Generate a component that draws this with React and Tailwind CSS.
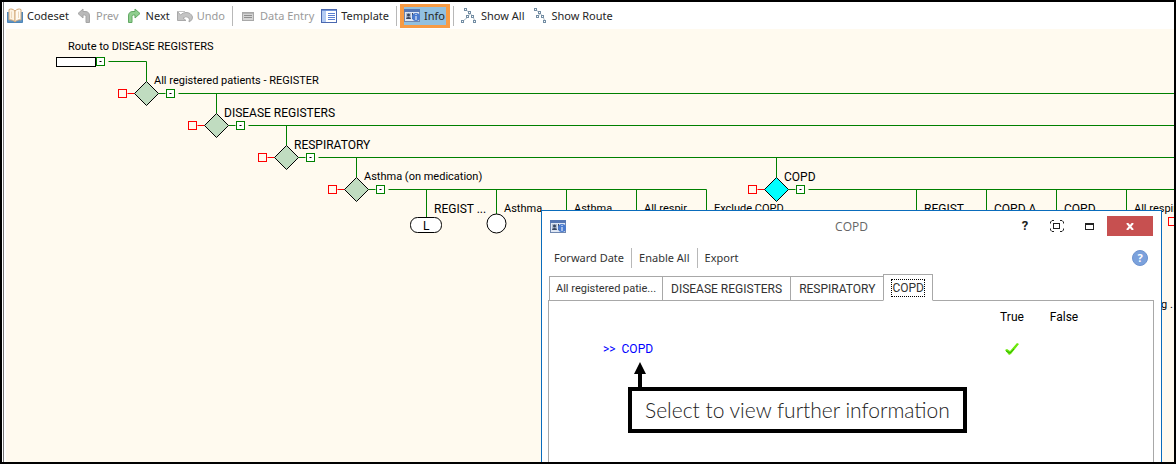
import clsx from "clsx";

// Shapes and labels share the same canvas coordinates.
const decisions = [
  { x: 140, y: 64, label: "All registered patients - REGISTER" },
  { x: 210, y: 96, label: "DISEASE REGISTERS" },
  { x: 280, y: 128, label: "RESPIRATORY" },
  { x: 350, y: 160, label: "Asthma (on medication)" },
  { x: 770, y: 160, label: "COPD", active: true },
];

const leaves = [
  { x: 420, label: "REGIST ..." },
  { x: 490, label: "Asthma ..." },
  { x: 560, label: "Asthma ..." },
  { x: 630, label: "All respir..." },
  { x: 700, label: "Exclude COPD" },
  { x: 910, label: "REGIST ..." },
  { x: 980, label: "COPD A..." },
  { x: 1050, label: "COPD ..." },
  { x: 1120, label: "All respir" },
];

const tabs = ["All registered patie...", "DISEASE REGISTERS", "RESPIRATORY", "COPD"];

// Names in capitals are set one size larger than mixed-case ones.
const isCaps = (text) => text === text.toUpperCase();

function BookIcon() {
  return (
    <svg width="16" height="16" viewBox="0 0 16 16" aria-hidden="true">
      <path d="M0.500 4V14.500H15.500V4" fill="#5d93c4" stroke="#4f86b8" />
      <path d="M8 3C6 1 4 0.500 2 1.500V12C4 11.500 6 12 8 14Z" fill="#fdf3e3" stroke="#d3a878" />
      <path d="M8 3C10 1 12 0.500 14 1.500V12C12 11.500 10 12 8 14Z" fill="#fffaf2" stroke="#d3a878" />
      <path d="M4.500 3.500V10M11.500 3.500V10" stroke="#ecd7bb" />
    </svg>
  );
}

function TurnIcon({ color, edge, flip }) {
  return (
    <svg width="16" height="16" viewBox="0 0 16 16" aria-hidden="true">
      <path
        d="M2.500 14.500H6V8.500Q6 7 7.500 7H9V10L14 5.500L9 1V3.500H7Q2.500 3.500 2.500 8Z"
        fill={color}
        stroke={edge}
        transform={flip ? "translate(16 0) scale(-1 1)" : undefined}
      />
    </svg>
  );
}

function UndoIcon() {
  return (
    <svg width="16" height="16" viewBox="0 0 16 16" aria-hidden="true">
      <path d="M0.500 3.500V12.500H9L6 10Q9 7.500 11.500 9.500Q13 11 12 14Q16 12 15.500 9Q14 4.500 9 4.500Q6 4.500 3.500 7Z" fill="#c4c4c4" stroke="#a9a9a9" />
      <path d="M1 3.500H8" stroke="#c4c4c4" />
    </svg>
  );
}

function EntryIcon() {
  return (
    <svg width="16" height="16" viewBox="0 0 16 16" aria-hidden="true">
      <rect x="2.500" y="4.500" width="11" height="8" fill="#d4d4d4" stroke="#a8a8a8" />
      <path d="M3 5.500H13" stroke="#b5b5b5" />
      <path d="M4 7.500H12M4 9.500H12" stroke="#8f8f8f" />
    </svg>
  );
}

function TemplateIcon() {
  return (
    <svg width="16" height="16" viewBox="0 0 16 16" aria-hidden="true">
      <rect x="0.500" y="1.500" width="15" height="13" fill="#fff" stroke="#4a68b0" />
      <path d="M1 2.500H15" stroke="#6f92d8" />
      <rect x="1" y="3" width="4" height="11" fill="#b3cbf3" />
      <path d="M7 5.500H14M7 7.500H14M7 9.500H14M7 11.500H14" stroke="#5b7fd0" />
    </svg>
  );
}

function InfoIcon() {
  return (
    <svg width="16" height="13" viewBox="0 0 16 13" aria-hidden="true">
      <rect x="0.500" y="0.500" width="15" height="12" fill="#dfe7f4" stroke="#6f87b0" />
      <rect x="0" y="0" width="16" height="3" fill="#5677b4" />
      <rect x="2" y="4" width="5" height="6" fill="#aebbd0" />
      <circle cx="4.500" cy="6" r="1.500" fill="#39465f" />
      <path d="M2 10Q2 8 4.500 8T7 10Z" fill="#39465f" />
      <path d="M8.500 4V10" stroke="#39465f" />
      <circle cx="12" cy="8" r="4" fill="#4a7bcf" />
      <path d="M12 5V6M12 7V11" stroke="#fff" />
    </svg>
  );
}

function RouteIcon({ all }) {
  const boxes = all
    ? [[4, 1], [8, 4], [6, 8], [1, 13], [11, 8], [13, 13]]
    : [[3, 1], [7, 4], [5, 8], [10, 8], [12, 13]];
  return (
    <svg width="16" height="16" viewBox="0 0 16 16" aria-hidden="true">
      <path
        d={all ? "M5 2L9 5L7 9L2 13M9 5L12 9L14 13" : "M4 2L8 5L6 9M8 5L11 9L13 13"}
        fill="none"
        stroke="#a9b8c4"
      />
      {boxes.map(([x, y]) => (
        <rect key={`${x}-${y}`} x={x - 0.5} y={y - 0.5} width="2" height="2" fill="#fff" stroke="#738da3" />
      ))}
    </svg>
  );
}

function ToolButton({ icon, children, disabled }) {
  return (
    <button
      type="button"
      disabled={disabled}
      className={clsx(
        "flex items-center gap-1 whitespace-nowrap",
        disabled ? "text-[#9a9a9a]" : "text-[#262626]"
      )}
    >
      {icon}
      {children}
    </button>
  );
}

function Divider() {
  return <span className="h-5 w-px shrink-0 bg-[#b8b8b8]" />;
}

function Toolbar() {
  return (
    <header className="flex h-[27px] shrink-0 items-center gap-[7px] bg-white pl-[3px] font-['Noto_Sans',sans-serif] text-[11px] leading-4">
      <ToolButton icon={<BookIcon />}>Codeset</ToolButton>
      <ToolButton icon={<TurnIcon color="#b9b9b9" edge="#a5a5a5" flip />} disabled>Prev</ToolButton>
      <ToolButton icon={<TurnIcon color="#8fce8f" edge="#62a863" />}>Next</ToolButton>
      <ToolButton icon={<UndoIcon />} disabled>Undo</ToolButton>
      <Divider />
      <ToolButton icon={<EntryIcon />} disabled>Data Entry</ToolButton>
      <ToolButton icon={<TemplateIcon />}>Template</ToolButton>
      <Divider />
      <button
        type="button"
        className="-mx-1 flex h-6 items-center gap-1 border-x-4 border-y-3 border-[#f79b45] bg-[#92c0e0] text-[#262626]"
      >
        <InfoIcon />
        <span className="pr-px">Info</span>
      </button>
      <Divider />
      <ToolButton icon={<RouteIcon all />}>Show All</ToolButton>
      <ToolButton icon={<RouteIcon />}>Show Route</ToolButton>
    </header>
  );
}

function Expander({ x, y }) {
  return (
    <g>
      <rect x={x - 4} y={y - 4} width="8" height="8" fill="#fff" stroke="#008000" />
      <path d={`M${x - 1} ${y}h2`} stroke="#000" />
    </g>
  );
}

function Decision({ x, y, active }) {
  return (
    <g>
      <path d={`M${x - 19} ${y}h7`} stroke="#f00" />
      <rect x={x - 28} y={y - 4} width="8" height="8" fill="#fffaef" stroke="#f00" />
      <path d={`M${x + 12} ${y}h7`} stroke="#008000" />
      <Expander x={x + 24} y={y} />
      <path
        d={`M${x} ${y - 12}l12 12l-12 12l-12 -12z`}
        fill={active ? "#00ffff" : "#c0dcc0"}
        stroke="#000"
      />
    </g>
  );
}

function Label({ x, y, children }) {
  return (
    <span
      className={clsx("absolute whitespace-pre", isCaps(children) ? "text-[12px]" : "text-[11px]")}
      style={{ left: x, top: y }}
    >
      {children}
    </span>
  );
}

function Diagram() {
  return (
    <div className="absolute inset-0 overflow-hidden font-[Roboto,sans-serif] leading-4 text-black">
      <svg className="absolute inset-0 h-full w-full" aria-hidden="true">
        <g transform="translate(0.5 0.5)" fill="none">
          <g stroke="#008000">
            <path d="M102 32H140V52" />
            <path d="M172 64H3000M210 64V84" />
            <path d="M242 96H3000M280 96V116" />
            <path d="M312 128H3000M350 128V148M770 128V148" />
            <path d="M382 160H700M802 160H3000" />
            {leaves.map((leaf) => (
              <path key={leaf.x} d={`M${leaf.x} 160v28`} />
            ))}
          </g>
          <rect x="50" y="28" width="39" height="9" fill="#fff" stroke="#000" />
          <Expander x={94} y={32} />
          {decisions.map((node) => (
            <Decision key={node.label} {...node} />
          ))}
          <rect x="404" y="188" width="31" height="15" rx="7" fill="#fff" stroke="#000" />
          <circle cx="490" cy="194" r="9.500" fill="#fff" stroke="#000" />
          <rect x="1162" y="188" width="8" height="8" stroke="#f00" />
        </g>
      </svg>
      <Label x={62} y={10}>Route to DISEASE REGISTERS</Label>
      {decisions.map((node) => (
        <Label key={node.label} x={node.x + 8} y={node.y - 20}>{node.label}</Label>
      ))}
      {leaves.map((leaf) => (
        <Label key={leaf.x} x={leaf.x + 8} y={172}>{leaf.label}</Label>
      ))}
      <Label x={417} y={189}>L</Label>
      <Label x={1155} y={268}>g .</Label>
    </div>
  );
}

function TitleBar() {
  return (
    <div className="relative flex h-[30px] items-center justify-end pr-2">
      <span className="absolute top-[9px] left-2">
        <InfoIcon />
      </span>
      <h1 className="absolute inset-x-0 top-2 text-center font-['Open_Sans',sans-serif] text-[12px] leading-4 text-[#666]">
        COPD
      </h1>
      <button type="button" aria-label="Help" className="relative flex h-5 w-8 items-center justify-center text-[13px] font-bold text-[#222]">
        ?
      </button>
      <button type="button" aria-label="Full screen" className="relative flex h-5 w-8 items-center justify-center">
        <svg width="14" height="12" viewBox="0 0 14 12" fill="none" stroke="#222">
          <path d="M4 0.500H2L0.500 2V3.500M10 0.500H12L13.500 2V3.500M4 11.500H2L0.500 10V8.500M10 11.500H12L13.500 10V8.500" />
          <rect x="3.500" y="3.500" width="6" height="5" />
        </svg>
      </button>
      <button type="button" aria-label="Maximise" className="relative flex h-5 w-8 items-center justify-center">
        <svg width="9" height="7" viewBox="0 0 9 7">
          <rect x="0.500" y="0.500" width="8" height="6" fill="none" stroke="#222" />
          <rect width="9" height="2" fill="#222" />
        </svg>
      </button>
      <button type="button" aria-label="Close" className="relative ml-0.5 flex h-5 w-[46px] items-center justify-center bg-[#c75050]">
        <svg width="8" height="7" viewBox="0 0 8 7">
          <path d="M1 0L7 7M7 0L1 7" stroke="#fff" strokeWidth="2" />
        </svg>
      </button>
    </div>
  );
}

function Tabs() {
  return (
    <div role="tablist" className="relative z-10 -mb-px ml-px flex items-end text-[#333]">
      {tabs.map((tab) => {
        const selected = tab === "COPD";
        return (
          <button
            key={tab}
            type="button"
            role="tab"
            aria-selected={selected}
            className={clsx(
              "flex items-center border bg-white whitespace-nowrap",
              selected
                ? "h-[27px] border-[#a8a8a8] border-b-white px-[7px]"
                : "h-[25px] border-r-0 border-[#a8a8a8]",
              !selected && (isCaps(tab) ? "px-2" : "px-1.5 text-[11px]")
            )}
          >
            <span className={clsx(selected && "border border-dotted border-black")}>{tab}</span>
          </button>
        );
      })}
    </div>
  );
}

function Callout() {
  return (
    <div className="absolute top-[61px] left-[79px]">
      <svg width="12" height="25" viewBox="0 0 12 25" className="ml-[6px] block" aria-hidden="true">
        <path d="M6 0L12 12H8V25H4V12H0Z" />
      </svg>
      <p className="border-4 border-black bg-white px-[13px] py-[7px] font-[Lato,sans-serif] text-[21px] leading-6 font-light whitespace-nowrap text-[#222]">
        Select to view further information
      </p>
    </div>
  );
}

function InfoDialog() {
  return (
    <section
      role="dialog"
      aria-label="COPD"
      className="absolute top-[181px] right-3 bottom-0 left-[535px] flex flex-col border border-b-0 border-[#0a6cbc] bg-white font-[Roboto,sans-serif] text-[12px] leading-4"
    >
      <TitleBar />
      <div className="flex h-[33px] items-center gap-[7px] pr-[13px] pl-3 font-['Noto_Sans',sans-serif] text-[11px] text-[#333]">
        <button type="button">Forward Date</button>
        <Divider />
        <button type="button">Enable All</button>
        <Divider />
        <button type="button">Export</button>
        <button
          type="button"
          aria-label="Help topics"
          className="ml-auto flex size-4 items-center justify-center rounded-full border border-[#6d93cf] bg-[#7ba1dc] font-bold text-white"
        >
          ?
        </button>
      </div>
      <div className="flex flex-1 flex-col pr-[7px] pl-[6px]">
        <Tabs />
        <div className="relative flex-1 border border-b-0 border-[#a8a8a8] pr-[63px]">
          <table className="mt-2 w-full table-fixed">
            <thead>
              <tr className="h-4">
                <th aria-label="Register" />
                <th className="w-[52px] font-normal">True</th>
                <th className="w-[52px] font-normal">False</th>
              </tr>
            </thead>
            <tbody>
              <tr className="h-12">
                <td className="pl-[54px] text-[#0000ff]">
                  <a href="#copd" className="flex gap-1.5">
                    <span>&gt;&gt;</span>
                    COPD
                  </a>
                </td>
                <td>
                  <svg width="14" height="12" viewBox="0 0 14 12" className="mx-auto" role="img" aria-label="Yes">
                    <path d="M0 7L2 6L5 8L12 0L14 1L6 11L4 12Z" fill="#6be80a" />
                    <path d="M1 8L5 10L9 6" fill="none" stroke="#2fb309" />
                  </svg>
                </td>
                <td />
              </tr>
            </tbody>
          </table>
          <Callout />
        </div>
      </div>
    </section>
  );
}

export default function App() {
  return (
    <div className="flex h-screen min-h-80 border-2 border-black bg-white pl-px">
      <div className="flex min-w-0 flex-1 flex-col border-l border-[#777]">
        <Toolbar />
        <main className="relative ml-0.5 flex-1 overflow-hidden bg-[#fffaef]">
          <Diagram />
          <InfoDialog />
        </main>
      </div>
    </div>
  );
}
